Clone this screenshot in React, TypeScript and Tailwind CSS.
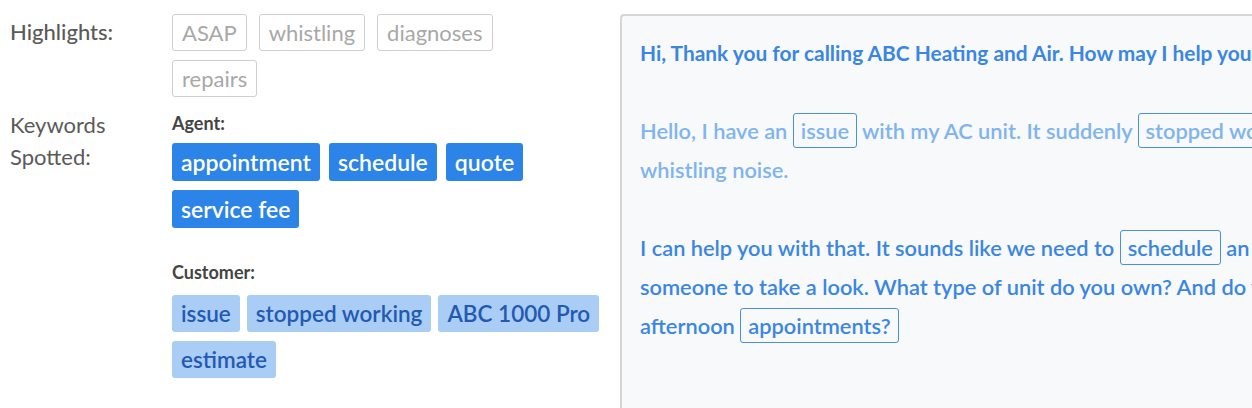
const HIGHLIGHTS = ['ASAP', 'whistling', 'diagnoses', 'repairs']
const AGENT = ['appointment', 'schedule', 'quote', 'service fee']
const CUSTOMER = ['issue', 'stopped working', 'ABC 1000 Pro', 'estimate']

function Boxed({ children }: { children: React.ReactNode }) {
  return (
    <span className="inline-block border-[1.5px] border-[#4a90e2] rounded-[3px] px-[7px] leading-[33px]">{children}</span>
  )
}

export default function App() {
  return (
    <div className="w-[1252px] h-[408px] overflow-hidden bg-white flex" style={{ fontFamily: 'Lato, "Open Sans", sans-serif' }}>
      {/* Left: highlights + keywords */}
      <div className="w-[620px] shrink-0 pl-[10px] pt-[14px]">
        <div className="flex">
          <div className="w-[162px] text-[22px] font-medium text-[#5a5a5a] leading-[36px]">Highlights:</div>
          <div className="flex flex-wrap gap-x-[12px] gap-y-[9px] w-[340px]">
            {HIGHLIGHTS.map(h => (
              <span key={h} className="h-[37px] flex items-center px-[9px] border-[1.5px] border-[#cfcfcf] rounded-[3px] text-[22px] text-[#a8a8a8]">{h}</span>
            ))}
          </div>
        </div>

        <div className="flex mt-[12px]">
          <div className="w-[162px] text-[22px] text-[#5a5a5a] leading-[32px]">Keywords<br />Spotted:</div>
          <div>
            <p className="text-[18px] font-bold text-[#444] leading-[24px] mt-[2px]">Agent:</p>
            <div className="flex flex-wrap gap-[9px] w-[360px] mt-[8px]">
              {AGENT.map(k => (
                <span key={k} className="h-[38px] flex items-center px-[9px] rounded-[3px] bg-[#2d84e8] text-white text-[23px] font-semibold">{k}</span>
              ))}
            </div>
            <p className="text-[18px] font-bold text-[#444] leading-[24px] mt-[32px]">Customer:</p>
            <div className="flex flex-wrap gap-x-[7px] gap-y-[9px] w-[440px] mt-[11px]">
              {CUSTOMER.map(k => (
                <span key={k} className="h-[37px] flex items-center px-[9px] rounded-[3px] bg-[#a9cdf5] text-[#2459b2] text-[22.5px] font-semibold">{k}</span>
              ))}
            </div>
          </div>
        </div>
      </div>

      {/* Right: transcript */}
      <div className="flex-1 mt-[14px] border-l-[2px] border-t-[2px] border-[#d6d6d6] rounded-tl-[4px] bg-[#f7f9fa] pl-[18px] pt-[17px] whitespace-nowrap text-[21.8px] font-semibold leading-[39px]">
        <p className="text-[#3a86e2] font-bold text-[20.9px]">Hi, Thank you for calling ABC Heating and Air. How may I help you today?</p>
        <div className="mt-[39px] text-[#80b4ee]">
          <p>Hello, I have an <Boxed>issue</Boxed> with my AC unit. It suddenly <Boxed>stopped working</Boxed> and is making a</p>
          <p>whistling noise.</p>
        </div>
        <div className="mt-[39px] text-[#3a86e2]">
          <p>I can help you with that. It sounds like we need to <Boxed>schedule</Boxed> an appointment for</p>
          <p>someone to take a look. What type of unit do you own? And do you prefer morning or</p>
          <p>afternoon <Boxed>appointments?</Boxed></p>
        </div>
      </div>
    </div>
  )
}
